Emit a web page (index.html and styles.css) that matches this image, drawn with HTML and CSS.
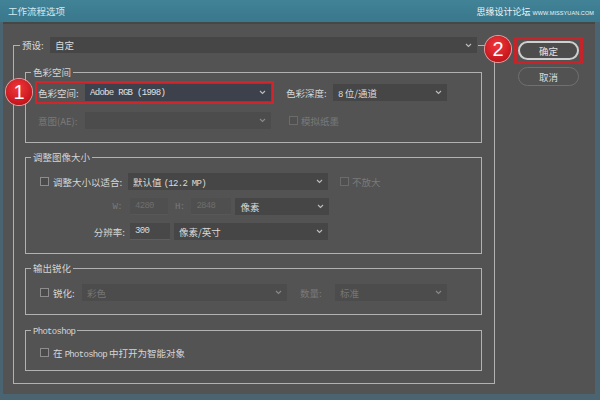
FILE: index.html
```html
<!DOCTYPE html>
<html lang="zh">
<head>
<meta charset="utf-8">
<title>工作流程选项</title>
<link rel="stylesheet" href="styles.css">
</head>
<body>
<div class="window">
  <div class="titlebar">
    <span class="title">工作流程选项</span>
    <span class="wm">思缘设计论坛 <small>WWW.MISSYUAN.COM</small></span>
  </div>
  <div class="client">
    <fieldset class="outer">
      <legend class="preset">
        <span class="plbl">预设:</span>
        <div class="select sel-preset"><span>自定</span><svg class="chev" viewBox="0 0 7 5"><path d="M1 1l2.5 2.5L6 1"/></svg></div>
        <span class="badge b2">2</span>
      </legend>
      <div class="outer-body">
        <fieldset class="sect s1">
          <legend>色彩空间</legend>
          <div class="row">
            <div class="grp">
              <span class="badge b1">1</span>
              <span class="lbl w47">色彩空间:</span>
              <div class="select w186 blue"><span class="en">Adobe RGB (1998)</span><svg class="chev" viewBox="0 0 7 5"><path d="M1 1l2.5 2.5L6 1"/></svg></div>
            </div>
            <span class="lbl w47 ml15">色彩深度:</span>
            <div class="select w114"><span><span class="en">8</span>&nbsp;位/通道</span><svg class="chev" viewBox="0 0 7 5"><path d="M1 1l2.5 2.5L6 1"/></svg></div>
          </div>
          <div class="row">
            <span class="lbl w47 dis">意图(AE):</span>
            <div class="select w186 disabled"><span></span><svg class="chev" viewBox="0 0 7 5"><path d="M1 1l2.5 2.5L6 1"/></svg></div>
            <span class="cb dis ml18"></span>
            <span class="lbl dis ml3">模拟纸墨</span>
          </div>
        </fieldset>

        <fieldset class="sect s2">
          <legend>调整图像大小</legend>
          <div class="row">
            <div class="col"><span class="cb ml2"></span><span class="lbl ml4">调整大小以适合:</span></div>
            <div class="select w200"><span>默认值 <span class="en">(12.2 MP)</span></span><svg class="chev" viewBox="0 0 7 5"><path d="M1 1l2.5 2.5L6 1"/></svg></div>
            <span class="cb dis ml12"></span>
            <span class="lbl dis ml3">不放大</span>
          </div>
          <div class="row">
            <div class="col right pr6"><span class="lbl en dis">W:</span></div>
            <div class="inp dis w38 ml2"><span class="en">4280</span></div>
            <span class="lbl en dis ml7">H:</span>
            <div class="inp dis w40 ml7"><span class="en">2848</span></div>
            <div class="select w94 ml4"><span>像素</span><svg class="chev" viewBox="0 0 7 5"><path d="M1 1l2.5 2.5L6 1"/></svg></div>
          </div>
          <div class="row">
            <div class="col right pr3"><span class="lbl">分辨率:</span></div>
            <div class="inp w40 ml2"><span class="en">300</span></div>
            <div class="select w154 ml4"><span>像素/英寸</span><svg class="chev" viewBox="0 0 7 5"><path d="M1 1l2.5 2.5L6 1"/></svg></div>
          </div>
        </fieldset>

        <fieldset class="sect s3">
          <legend>输出锐化</legend>
          <div class="row">
            <span class="cb ml2"></span>
            <span class="lbl ml4 w29">锐化:</span>
            <div class="select w205 disabled"><span>彩色</span><svg class="chev" viewBox="0 0 7 5"><path d="M1 1l2.5 2.5L6 1"/></svg></div>
            <span class="lbl dis ml13 w35">数量:</span>
            <div class="select w112 disabled"><span>标准</span><svg class="chev" viewBox="0 0 7 5"><path d="M1 1l2.5 2.5L6 1"/></svg></div>
          </div>
        </fieldset>

        <fieldset class="sect s4">
          <legend><span class="en">Photoshop</span></legend>
          <div class="row">
            <span class="cb ml2"></span>
            <span class="lbl ml4">在 <span class="en">Photoshop</span> 中打开为智能对象</span>
          </div>
        </fieldset>
      </div>
    </fieldset>

    <div class="buttons">
      <div class="okframe"><button class="btn ok">确定</button></div>
      <button class="btn cancel">取消</button>
    </div>
  </div>
</div>
</body>
</html>
```
FILE: styles.css
```css
* { box-sizing: border-box; }
body {
  margin: 0;
  background: #4a6571;
  font-family: "Noto Sans CJK SC", "Noto Sans", sans-serif;
  font-size: 9.5px;
  color: #d6d6d6;
  overflow: hidden;
}
.window {
  width: 600px;
  height: 400px;
  display: flex;
  flex-direction: column;
}
.titlebar {
  height: 22px;
  flex: none;
  background: linear-gradient(#418397, #3a788b);
  display: flex;
  align-items: center;
  justify-content: space-between;
  padding: 0 6px 0 8px;
  color: #d3e8ef;
}
.wm { color: #eef5f7; font-size: 9px; }
.wm small { font-family: "Liberation Sans", sans-serif; font-size: 5.5px; letter-spacing: 0.1px; }
.client {
  flex: 1;
  margin: 0 5px 6px 3px;
  background: #535353;
  border-top: 2px solid #464646;
  display: flex;
  align-items: flex-start;
  padding: 13px 0 0 10px;
}
.en {
  font-family: "Liberation Mono", monospace;
  font-size: 9px;
  letter-spacing: -0.7px;
}
fieldset { margin: 0; min-width: 0; }
.outer {
  width: 482px;
  padding: 0;
  border: 1px solid #b1b1b1;
}
.preset {
  margin-left: 6px;
  padding: 0 1px 0 2px;
  display: flex;
  align-items: center;
  height: 16px;
  position: relative;
}
.plbl { width: 28px; color: #d8d8d8; }
.outer-body { padding: 13px 12px 12px 11px; }
.sect {
  padding: 0;
  border: 1px solid #b1b1b1;
}
.sect > legend {
  margin-left: -7px;
  padding: 0 2px;
  height: 12px;
  line-height: 12px;
  color: #d4d4d4;
}
.s2 { margin-top: 8px; padding: 10px 12px 13px 12px; }
.s1 { padding: 6px 12px 13px 12px; }
.s3 { margin-top: 8px; padding: 10px 12px 13px 12px; }
.s4 { margin-top: 9px; padding: 8px 12px 9px 12px; }
.s1 .row + .row { margin-top: 11px; }
.s2 .row + .row { margin-top: 8px; }
.row {
  display: flex;
  align-items: center;
  height: 17px;
}
.grp {
  display: flex;
  align-items: center;
  position: relative;
  outline: 2px solid #d3232b;
  outline-offset: 1px;
}
.lbl { white-space: nowrap; flex: none; }
.dis { color: #7a7a7a; }
.select {
  height: 17px;
  flex: none;
  display: flex;
  align-items: center;
  justify-content: space-between;
  padding: 0 5px 0 5px;
  background: #464646;
  color: #dadada;
}
.select.blue { background: #3d414b; color: #e2e2e2; }
.select.disabled { background: #4c4c4c; color: #767676; }
.sel-preset { width: 427px; height: 16px; }
.chev { width: 7px; height: 5px; fill: none; stroke: #bdbdbd; stroke-width: 1.1; }
.disabled .chev { stroke: #8a8a8a; }
.cb {
  width: 9px;
  height: 9px;
  flex: none;
  border: 1px solid #8d8d8d;
  background: #4b4b4b;
}
.cb.dis { border-color: #6b6b6b; background: #505050; }
.inp {
  height: 17px;
  flex: none;
  display: flex;
  align-items: center;
  padding-left: 5px;
  background: #484848;
  border-bottom: 1px solid #5e5e5e;
  color: #dcdcdc;
}
.inp.dis { background: #4f4f4f; color: #6e6e6e; border-bottom-color: #575757; }
.col { width: 90px; flex: none; display: flex; align-items: center; }
.col.right { justify-content: flex-end; }
.pr6 { padding-right: 6px; }
.pr3 { padding-right: 3px; }
.w29 { width: 29px; }
.w35 { width: 35px; }
.w38 { width: 38px; }
.w40 { width: 40px; }
.w47 { width: 47px; }
.w94 { width: 94px; }
.w112 { width: 112px; }
.w114 { width: 114px; }
.w154 { width: 154px; }
.w186 { width: 186px; }
.w200 { width: 200px; }
.w205 { width: 205px; }
.ml2 { margin-left: 2px; }
.ml3 { margin-left: 3px; }
.ml4 { margin-left: 4px; }
.ml7 { margin-left: 7px; }
.ml12 { margin-left: 12px; }
.ml13 { margin-left: 13px; }
.ml15 { margin-left: 15px; }
.ml18 { margin-left: 18px; }
.badge {
  position: absolute;
  width: 26px;
  height: 26px;
  border-radius: 50%;
  background: radial-gradient(circle at 45% 35%, #f0383d, #c8161d 70%, #a51218);
  box-shadow: 0 0 0 1px #e99a9c;
  color: #ffffff;
  font-family: "Liberation Sans", sans-serif;
  font-size: 20px;
  line-height: 26px;
  text-align: center;
}
.b1 { left: -32px; top: -5px; }
.b2 { left: 465px; top: -1px; }
.buttons {
  margin-left: 19px;
  display: flex;
  flex-direction: column;
  align-items: flex-start;
}
.okframe {
  border: 3px solid #c6242b;
  padding: 1px;
}
.btn {
  width: 61px;
  height: 19px;
  border-radius: 10px;
  font-family: inherit;
  font-size: 9.5px;
  color: #e2e2e2;
  padding: 0;
  display: block;
}
.ok {
  border: 2px solid #cfcfcf;
  background: #4d4d4d;
}
.cancel {
  margin: 3px 0 0 4px;
  border: 1px solid #707070;
  background: #525252;
  color: #dcdcdc;
}
```
